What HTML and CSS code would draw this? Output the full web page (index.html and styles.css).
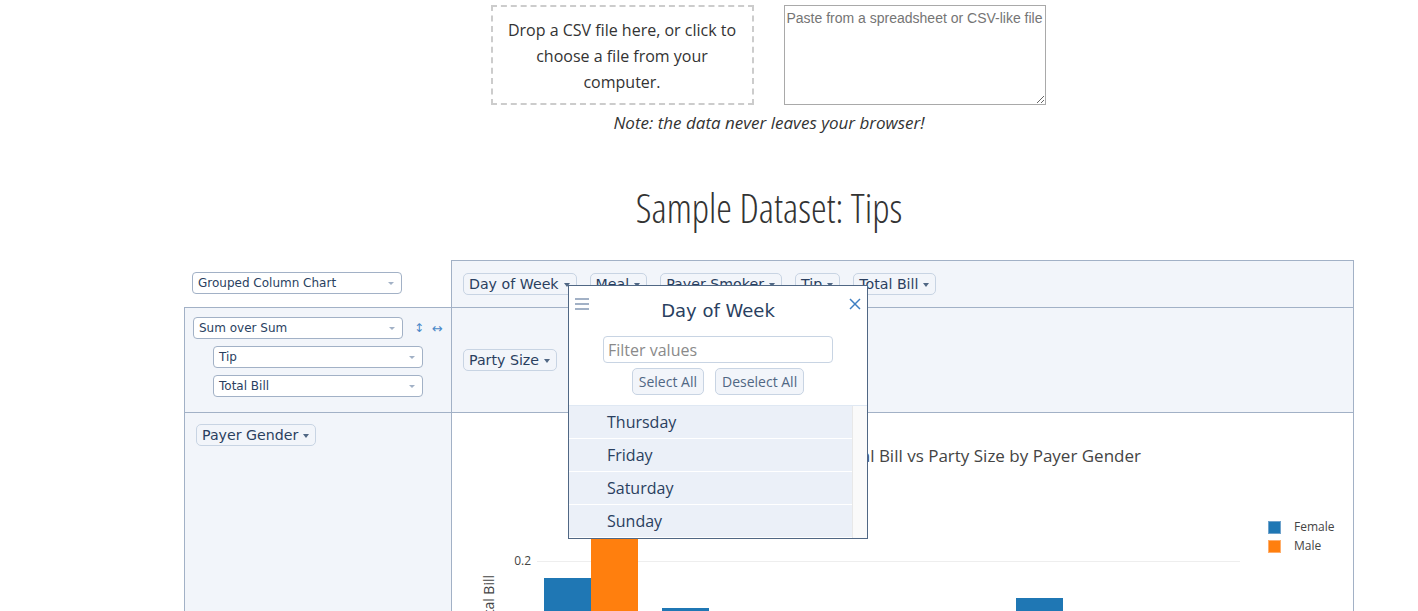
FILE: index.html
```html
<!DOCTYPE html>
<html>
<head>
<meta charset="utf-8">
<title>Pivot</title>
<link rel="stylesheet" href="styles.css">
</head>
<body>
<div class="page">
  <div class="upload">
    <div class="dropzone">Drop a CSV file here, or click to choose a file from your computer.</div>
    <textarea class="paste" placeholder="Paste from a spreadsheet or CSV-like file"></textarea>
  </div>
  <p class="note">Note: the data never leaves your browser!</p>
  <h2 class="title">Sample Dataset: Tips</h2>

  <div class="pivot">
    <div class="pvtUi">
      <div class="cell-renderers">
        <div class="dd">Grouped Column Chart</div>
      </div>
      <div class="cell-unused">
        <span class="chip">Day of Week</span>
        <span class="chip">Meal</span>
        <span class="chip">Payer Smoker</span>
        <span class="chip">Tip</span>
        <span class="chip">Total Bill</span>
      </div>

      <div class="cell-vals">
        <div class="agg-row">
          <div class="dd">Sum over Sum</div>
          <span class="order order-row">↕</span>
          <span class="order order-col">↔</span>
        </div>
        <div class="dd dd-sub">Tip</div>
        <div class="dd dd-sub">Total Bill</div>
      </div>
      <div class="cell-cols">
        <span class="chip">Party Size</span>
      </div>

      <div class="cell-rows">
        <span class="chip">Payer Gender</span>
      </div>
      <div class="cell-output">
        <svg class="chart" width="901" height="420" viewBox="0 0 901 420">
          <text x="689" y="49" text-anchor="end" class="ctitle">Sum over Sum of Tip, Total Bill vs Party Size by Payer Gender</text>
          <line x1="85" y1="148.5" x2="788" y2="148.5" stroke="#eeeeee" stroke-width="1"/>
          <text x="79" y="152" text-anchor="end" class="tick">0.2</text>
          <text transform="translate(42,162) rotate(-90)" text-anchor="end" class="atitle">Sum over Sum of Tip, Total Bill</text>
          <rect x="92" y="165" width="47" height="255" fill="#1f77b4"/>
          <rect x="139" y="100" width="47" height="320" fill="#ff7f0e"/>
          <rect x="210" y="195" width="47" height="225" fill="#1f77b4"/>
          <rect x="564" y="185" width="47" height="235" fill="#1f77b4"/>
          <rect x="816.5" y="108.5" width="12" height="12" fill="#1f77b4" stroke="#6fa3cc" stroke-width="1"/>
          <rect x="816.5" y="127.5" width="12" height="12" fill="#ff7f0e" stroke="#ffae6b" stroke-width="1"/>
          <text x="842" y="118" class="legend">Female</text>
          <text x="842" y="137" class="legend">Male</text>
        </svg>
      </div>
    </div>

    <div class="filterBox">
      <svg class="dragHandle" width="14" height="12" viewBox="0 0 14 12">
        <line x1="0" y1="1" x2="14" y2="1" stroke="#a2b1c6" stroke-width="2"/>
        <line x1="0" y1="6" x2="14" y2="6" stroke="#a2b1c6" stroke-width="2"/>
        <line x1="0" y1="11" x2="14" y2="11" stroke="#a2b1c6" stroke-width="2"/>
      </svg>
      <svg class="closeX" width="12" height="12" viewBox="0 0 12 12">
        <line x1="1" y1="1" x2="11" y2="11" stroke="#3f7fc2" stroke-width="1.5"/>
        <line x1="11" y1="1" x2="1" y2="11" stroke="#3f7fc2" stroke-width="1.5"/>
      </svg>
      <h4 class="fbTitle">Day of Week</h4>
      <input class="fbSearch" type="text" placeholder="Filter values">
      <div class="fbButtons">
        <button class="pvtButton">Select All</button>
        <button class="pvtButton">Deselect All</button>
      </div>
      <div class="checkContainer">
        <div class="checkList">
          <p>Thursday</p>
          <p>Friday</p>
          <p>Saturday</p>
          <p>Sunday</p>
        </div>
        <div class="scrollTrack"></div>
      </div>
    </div>
  </div>
</div>
</body>
</html>
```

FILE: styles.css
```css
* { box-sizing: border-box; }

body {
  margin: 0;
  font-family: "Open Sans", sans-serif;
  font-size: 16px;
  line-height: 26px;
  color: #333;
  background: #fff;
  overflow: hidden;
}

.page {
  width: 1170px;
  margin-left: 184px;
}

.upload {
  display: flex;
  justify-content: center;
  gap: 30px;
  padding-top: 5px;
  padding-right: 2px;
}

.dropzone {
  width: 263px;
  height: 100px;
  border: 2px dashed #cccccc;
  padding: 10px 14px 0;
  text-align: center;
  color: #333;
}

.paste {
  width: 262px;
  height: 100px;
  margin: 0;
  border: 1px solid #a9a9a9;
  padding: 4px 2px 2px;
  font: 14px/17px "Liberation Sans", Arial, sans-serif;
  resize: vertical;
}
.paste::placeholder { color: #757575; }

.note {
  margin: 5px 0 0;
  text-align: center;
  font-style: italic;
  font-size: 17px;
}

.title {
  margin: 50px 0 30px;
  text-align: center;
  font-family: "Open Sans", sans-serif;
  font-weight: 300;
  font-stretch: 75%;
  font-size: 39.6px;
  line-height: 44px;
  color: #333;
}

.pivot { position: relative; }

.pvtUi {
  display: grid;
  grid-template-columns: 267px 903px;
  grid-template-rows: 47px 105px 420px;
  color: #2a3f5f;
  font-family: "DejaVu Sans", Verdana, sans-serif;
  line-height: normal;
}

.cell-renderers { padding: 12px 0 0 8px; }

.cell-unused {
  background: #f2f5fa;
  border: 1px solid #a2b1c6;
  border-bottom: 0;
  padding: 12px 11px;
  display: flex;
  align-items: flex-start;
  gap: 13px;
}

.cell-vals {
  background: #f2f5fa;
  border-top: 1px solid #a2b1c6;
  border-left: 1px solid #a2b1c6;
  padding: 9px 0 0 8px;
  display: flex;
  flex-direction: column;
  gap: 7px;
}

.agg-row { display: flex; align-items: center; }

.order {
  color: #4a88c8;
  font-size: 12px;
}
.order-row { margin-left: 11px; }
.order-col { margin-left: 8px; font-size: 13px; }

.cell-cols {
  background: #f2f5fa;
  border: 1px solid #a2b1c6;
  border-bottom: 0;
  padding: 0 11px;
  display: flex;
  align-items: center;
}

.cell-rows {
  background: #f2f5fa;
  border-top: 1px solid #a2b1c6;
  border-left: 1px solid #a2b1c6;
  padding: 11px;
}

.cell-output {
  border: 1px solid #a2b1c6;
  border-bottom: 0;
  background: #fff;
}

.chart { display: block; }
.ctitle { font-family: "Open Sans", sans-serif; font-size: 17px; fill: #444; }
.tick { font-family: "Open Sans", sans-serif; font-size: 12px; fill: #444; }
.atitle { font-family: "Open Sans", sans-serif; font-size: 14px; fill: #444; }
.legend { font-family: "Open Sans", sans-serif; font-size: 12px; fill: #444; }

.dd {
  width: 210px;
  height: 22px;
  border: 1px solid #a2b1c6;
  border-radius: 4px;
  background: #fff;
  font-size: 12px;
  padding: 0 5px;
  display: flex;
  align-items: center;
  justify-content: space-between;
  color: #2a3f5f;
}
.dd::after {
  content: "";
  border-left: 3px solid transparent;
  border-right: 3px solid transparent;
  border-top: 3px solid #a2b1c6;
  margin-right: 2px;
}
.dd-sub { margin-left: 20px; }

.chip {
  display: inline-flex;
  align-items: center;
  height: 22px;
  padding: 0 6px 0 5px;
  border: 1px solid #c8d4e3;
  border-radius: 5px;
  background: #f2f5fa;
  font-size: 14.2px;
  color: #2a3f5f;
  white-space: nowrap;
}
.chip::after {
  content: "";
  margin-left: 5px;
  margin-top: 1px;
  border-left: 3.5px solid transparent;
  border-right: 3.5px solid transparent;
  border-top: 4px solid #506784;
}

.filterBox {
  position: absolute;
  left: 384px;
  top: 25px;
  width: 300px;
  height: 254px;
  border: 1px solid #506784;
  background: #fff;
  text-align: center;
  color: #2a3f5f;
  font-family: "DejaVu Sans", Verdana, sans-serif;
  z-index: 10;
}

.dragHandle { position: absolute; left: 6px; top: 12px; }
.closeX { position: absolute; right: 6px; top: 12px; }

.fbTitle {
  margin: 14px 0 15px;
  font-size: 18px;
  line-height: 21px;
  font-weight: normal;
}

.fbSearch {
  display: block;
  width: 230px;
  height: 27px;
  margin: 0 auto 5px;
  border: 1px solid #c8d4e3;
  border-radius: 4px;
  padding: 0 4px;
  font: 16px "Open Sans", sans-serif;
  color: #2a3f5f;
}
.fbSearch::placeholder { color: #8a8a8a; }

.fbButtons {
  display: flex;
  justify-content: center;
  gap: 11px;
  margin-bottom: 10px;
}

.pvtButton {
  height: 27px;
  margin: 0;
  padding: 0 6px;
  border: 1px solid #c8d4e3;
  border-radius: 5px;
  background: #f2f5fa;
  color: #506784;
  font: 14px/25px "Open Sans", sans-serif;
}

.checkContainer {
  display: flex;
  height: 133px;
  border-top: 1px solid #dfe8f3;
}

.checkList { flex: 1; }

.checkList p {
  margin: 0 0 1px;
  height: 32px;
  padding: 3px 3px 3px 38px;
  background: #ebf0f8;
  font: 16px/26px "Open Sans", sans-serif;
  text-align: left;
  color: #2a3f5f;
}

.scrollTrack {
  width: 15px;
  background: #fafafa;
  border-left: 1px solid #e8e8e8;
}
```
